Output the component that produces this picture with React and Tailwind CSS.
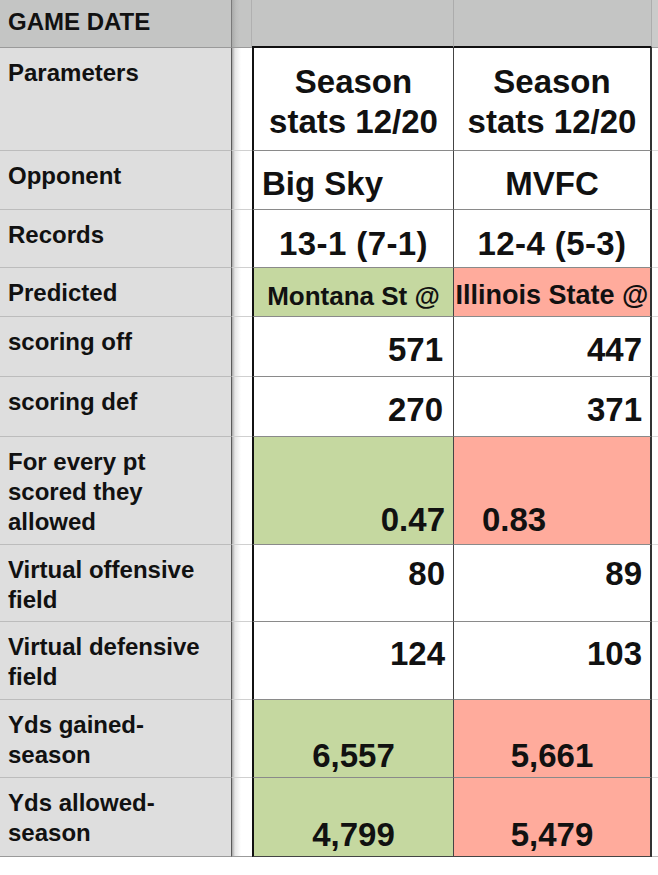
import React from "react";

const LBL = "bg-[#dedede] border-r border-r-[#5a5a5a] border-b border-b-[#bcbcbc] pl-2 pt-[10px] text-[24px] leading-[30px] font-bold text-[#111]";
const GAP = "bg-[linear-gradient(to_right,#a8a8a8,#e6e6e6_3px,#ffffff_9px)] border-b border-b-[#d0d0d0]";
const C3 = "border-l-2 border-l-[#111] border-b border-b-[#8a8a8a] flex text-[33px] leading-none font-bold text-[#111]";
const C4 = "border-l border-l-[#444] border-r-2 border-r-[#333] border-b border-b-[#8a8a8a] flex text-[33px] leading-none font-bold text-[#111]";
const C5 = "bg-white border-b border-b-[#dcdcdc]";

function Row({ h, label, c3, c4, last }) {
  return (
    <div className={`grid grid-cols-[232px_20px_201px_199px_6px] ${h}`}>
      <div className={LBL}>{label}</div>
      <div className={GAP}></div>
      <div className={c3.cls}>{c3.content}</div>
      <div className={c4.cls}>{c4.content}</div>
      <div className={last ? "bg-white border-b border-b-[#bdbdbd]" : C5}></div>
    </div>
  );
}

export default function App() {
  return (
    <div
      className="w-[658px] h-[875px] bg-white overflow-hidden"
      style={{ fontFamily: '"Liberation Sans", Arial, sans-serif' }}
    >
      {/* header */}
      <div className="grid grid-cols-[232px_20px_201px_199px_6px] h-[48px]">
        <div className="bg-[#c4c5c4] border-r border-r-[#7a7a7a] border-b border-b-[#9a9a9a] pl-2 pt-[7px] text-[24px] leading-[30px] font-bold text-[#111]">
          GAME DATE
        </div>
        <div className="bg-[linear-gradient(to_right,#a9aaa9,#bdbebd_4px,#c4c5c4_8px)] border-r border-r-[#b0b0b0] border-b border-b-[#9a9a9a]"></div>
        <div className="bg-[#c4c5c4] border-b-2 border-b-[#111]"></div>
        <div className="bg-[#c4c5c4] border-l border-l-[#acacac] border-r border-r-[#adadad] border-b-2 border-b-[#111]"></div>
        <div className="bg-[#cacbca] border-b border-b-[#a0a0a0]"></div>
      </div>

      <Row
        h="h-[103px]"
        label="Parameters"
        c3={{
          cls: `${C3} bg-white items-end justify-center pb-[8px]`,
          content: (
            <div className="text-center leading-[40px]">
              Season
              <br />
              stats 12/20
            </div>
          ),
        }}
        c4={{
          cls: `${C4} bg-white items-end justify-center pb-[8px]`,
          content: (
            <div className="text-center leading-[40px]">
              Season
              <br />
              stats 12/20
            </div>
          ),
        }}
      />
      <Row
        h="h-[59px]"
        label="Opponent"
        c3={{ cls: `${C3} bg-white items-end justify-start pl-[8px] pb-[9px]`, content: "Big Sky" }}
        c4={{ cls: `${C4} bg-white items-end justify-center pb-[9px]`, content: "MVFC" }}
      />
      <Row
        h="h-[58px]"
        label="Records"
        c3={{ cls: `${C3} bg-white items-end justify-center pb-[7px] tracking-[0.4px]`, content: "13-1 (7-1)" }}
        c4={{ cls: `${C4} bg-white items-end justify-center pb-[7px] tracking-[0.4px]`, content: "12-4 (5-3)" }}
      />
      <Row
        h="h-[49px]"
        label="Predicted"
        c3={{
          cls: `${C3} bg-[#c5d8a0] items-end justify-center pb-[7px] !text-[26px]`,
          content: "Montana St @",
        }}
        c4={{
          cls: `${C4} bg-[#ffab9c] items-end justify-center pb-[7px] !text-[27px] whitespace-nowrap`,
          content: "Illinois State @",
        }}
      />
      <Row
        h="h-[60px]"
        label="scoring off"
        c3={{ cls: `${C3} bg-white items-end justify-end pr-[10px] pb-[10px]`, content: "571" }}
        c4={{ cls: `${C4} bg-white items-end justify-end pr-[8px] pb-[10px]`, content: "447" }}
      />
      <Row
        h="h-[60px]"
        label="scoring def"
        c3={{ cls: `${C3} bg-white items-end justify-end pr-[10px] pb-[10px]`, content: "270" }}
        c4={{ cls: `${C4} bg-white items-end justify-end pr-[8px] pb-[10px]`, content: "371" }}
      />
      <Row
        h="h-[108px]"
        label={
          <>
            For every pt
            <br />
            scored they
            <br />
            allowed
          </>
        }
        c3={{ cls: `${C3} bg-[#c5d8a0] items-end justify-end pr-[8px] pb-[8px]`, content: "0.47" }}
        c4={{ cls: `${C4} bg-[#ffab9c] items-end justify-start pl-[28px] pb-[8px]`, content: "0.83" }}
      />
      <Row
        h="h-[77px]"
        label={
          <>
            Virtual offensive
            <br />
            field
          </>
        }
        c3={{ cls: `${C3} bg-white items-end justify-end pr-[8px] pb-[31px]`, content: "80" }}
        c4={{ cls: `${C4} bg-white items-end justify-end pr-[8px] pb-[31px]`, content: "89" }}
      />
      <Row
        h="h-[78px]"
        label={
          <>
            Virtual defensive
            <br />
            field
          </>
        }
        c3={{ cls: `${C3} bg-white items-end justify-end pr-[8px] pb-[29px]`, content: "124" }}
        c4={{ cls: `${C4} bg-white items-end justify-end pr-[8px] pb-[29px]`, content: "103" }}
      />
      <Row
        h="h-[78px]"
        label={
          <>
            Yds gained-
            <br />
            season
          </>
        }
        c3={{ cls: `${C3} bg-[#c5d8a0] items-end justify-center pb-[5px]`, content: "6,557" }}
        c4={{ cls: `${C4} bg-[#ffab9c] items-end justify-center pb-[5px]`, content: "5,661" }}
      />
      <div className="grid grid-cols-[232px_20px_201px_199px_6px] h-[79px]">
        <div className="bg-[#dedede] border-r border-r-[#5a5a5a] border-b border-b-[#9a9a9a] pl-2 pt-[10px] text-[24px] leading-[30px] font-bold text-[#111]">
          Yds allowed-
          <br />
          season
        </div>
        <div className="bg-[linear-gradient(to_right,#a8a8a8,#e6e6e6_3px,#ffffff_9px)] border-b border-b-[#9a9a9a]"></div>
        <div className="border-l-2 border-l-[#111] border-b border-b-[#444] flex items-end justify-center pb-[5px] bg-[#c5d8a0] text-[33px] leading-none font-bold text-[#111]">
          4,799
        </div>
        <div className="border-l border-l-[#444] border-r-2 border-r-[#333] border-b border-b-[#444] flex items-end justify-center pb-[5px] bg-[#ffab9c] text-[33px] leading-none font-bold text-[#111]">
          5,479
        </div>
        <div className="bg-white border-b border-b-[#bdbdbd]"></div>
      </div>
    </div>
  );
}
